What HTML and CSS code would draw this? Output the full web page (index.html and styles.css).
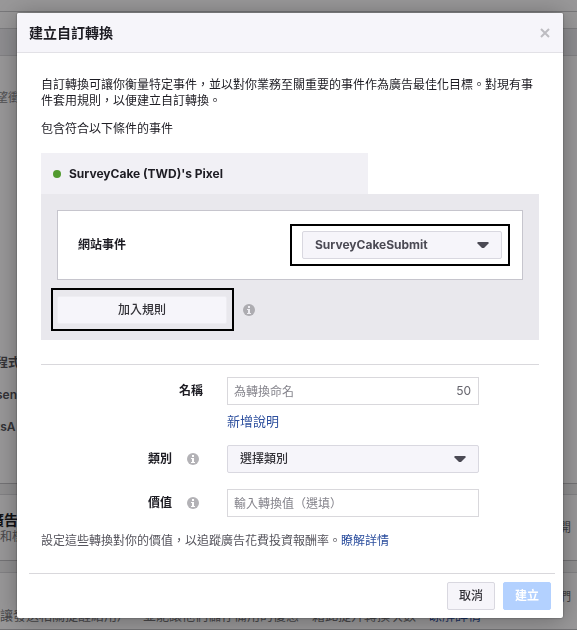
FILE: index.html
```html
<!DOCTYPE html>
<html lang="zh-Hant">

<head>
  <meta charset="utf-8">
  <title>建立自訂轉換</title>
  <link rel="stylesheet" href="styles.css">
</head>

<body>
  <div class="page">
    <div class="topbar"></div>
    <div class="subbar"></div>
    <div class="toolbar"></div>
    <div class="panel events">
      <p class="muted">望衝</p>
      <ul>
        <li>程式</li>
        <li>sen</li>
        <li>tsA</li>
      </ul>
    </div>
    <div class="panel card">
      <div>
        <h2>廣告</h2>
        <p>和標</p>
      </div>
      <span class="mark">開</span>
    </div>
    <div class="panel tips">
      <span class="mark">們</span>
      <p>讓發送相關提醒給用戶，並能讓他們儲存備用的優惠，藉此提升轉換次數。<a href="#">瞭解詳情</a></p>
    </div>
  </div>

  <div class="overlay">
    <form class="modal" role="dialog" aria-labelledby="title">
      <div class="modal-header">
        <h1 id="title">建立自訂轉換</h1>
        <button type="button" class="close" aria-label="關閉">
          <svg width="10" height="10" viewBox="0 0 10 10"><path d="M1 1l8 8M9 1L1 9" stroke="#bdbcc1" stroke-width="2" /></svg>
        </button>
      </div>

      <div class="modal-body">
        <p>自訂轉換可讓你衡量特定事件，並以對你業務至關重要的事件作為廣告最佳化目標。對現有事件套用規則，以便建立自訂轉換。</p>
        <p>包含符合以下條件的事件</p>

        <div class="pixel-tab"><span class="dot"></span>SurveyCake (TWD)'s Pixel</div>
        <div class="rules">
          <div class="rule">
            <label for="event">網站事件</label>
            <div class="highlight highlight-event">
              <div class="select">
                <select id="event">
                  <option>SurveyCakeSubmit</option>
                </select>
                <svg class="arrow" width="12" height="6" viewBox="0 0 12 6"><path d="M1 0h10l1 1-5 5H5L0 1z" fill="#4b4a54" /></svg>
              </div>
            </div>
          </div>
          <div class="add-rule">
            <div class="highlight highlight-add">
              <button type="button" class="btn btn-add">加入規則</button>
            </div>
            <svg class="info" width="12" height="12" viewBox="0 0 12 12"><circle cx="6" cy="6" r="6" fill="#adacb1" /><path d="M5 2h2v2H5zM4 5h3v4h1v1H4V9h1V6H4z" fill="#eeedf2" /></svg>
          </div>
        </div>

        <hr>

        <div class="row">
          <div class="row-label"><label for="name">名稱</label></div>
          <div class="field">
            <input type="text" id="name" placeholder="為轉換命名">
            <span class="counter">50</span>
          </div>
        </div>
        <a class="add-desc" href="#">新增說明</a>
        <div class="row">
          <div class="row-label">
            <label for="category">類別</label>
            <svg class="info" width="12" height="12" viewBox="0 0 12 12"><circle cx="6" cy="6" r="6" fill="#b3b2b6" /><path d="M5 2h2v2H5zM4 5h3v4h1v1H4V9h1V6H4z" fill="#fff" /></svg>
          </div>
          <div class="field select">
            <select id="category">
              <option>選擇類別</option>
            </select>
            <svg class="arrow" width="12" height="6" viewBox="0 0 12 6"><path d="M1 0h10l1 1-5 5H5L0 1z" fill="#4b4a54" /></svg>
          </div>
        </div>
        <div class="row">
          <div class="row-label">
            <label for="value">價值</label>
            <svg class="info" width="12" height="12" viewBox="0 0 12 12"><circle cx="6" cy="6" r="6" fill="#b3b2b6" /><path d="M5 2h2v2H5zM4 5h3v4h1v1H4V9h1V6H4z" fill="#fff" /></svg>
          </div>
          <div class="field">
            <input type="text" id="value" placeholder="輸入轉換值（選填）">
          </div>
        </div>
        <p class="hint">設定這些轉換對你的價值，以追蹤廣告花費投資報酬率。<a href="#">瞭解詳情</a></p>
      </div>

      <div class="modal-footer">
        <button type="button" class="btn">取消</button>
        <button type="submit" class="btn btn-primary" disabled>建立</button>
      </div>
    </form>
  </div>
</body>

</html>
```

FILE: styles.css
```css
* {
  box-sizing: border-box;
}

body,
input,
select,
button {
  font-family: Inter, "Noto Sans CJK TC", sans-serif;
  font-size: 12px;
  line-height: 16px;
}

body {
  margin: 0;
  color: #1d1c23;
}

h1,
h2,
p,
ul {
  margin: 0;
  padding: 0;
}

a {
  color: #2d4f9e;
  text-decoration: none;
}

/* page behind the dialog */
.page {
  display: flex;
  flex-direction: column;
  height: 100vh;
  overflow: hidden;
  background: #efeef0;
}

.page > * {
  flex-shrink: 0;
}

.topbar {
  height: 12px;
  background: #fdfcfe;
  border-bottom: 1px solid #c8c7cb;
}

.subbar {
  height: 17px;
  background: #fdfcfe;
  border-bottom: 1px solid #d0cfd3;
}

.toolbar {
  height: 27px;
  background: #ecebf0;
  border-bottom: 1px solid #d8d7db;
}

.panel {
  background: #fdfcfe;
  border-bottom: 1px solid #c0bfc3;
}

.events {
  height: 428px;
  padding-top: 34px;
  margin-bottom: 10px;
}

.muted {
  color: #8a898d;
  text-indent: -4px;
}

.events ul {
  margin-top: 241px;
  list-style: none;
  color: #55545a;
  font-weight: 600;
  line-height: 32px;
  text-indent: -4px;
}

.card {
  display: flex;
  justify-content: space-between;
  align-items: center;
  height: 67px;
  margin-bottom: 11px;
  border-top: 1px solid #d8d7db;
}

.card h2 {
  font-size: 14px;
  line-height: 18px;
  text-indent: -10px;
}

.card p {
  color: #77767a;
}

.mark {
  margin-right: 6px;
  color: #6b6a6e;
}

.tips {
  display: flex;
  flex-direction: column;
  flex: 1;
  padding-top: 16px;
  border-top: 1px solid #d8d7db;
}

.tips .mark {
  align-self: flex-end;
}

.tips p {
  margin-top: 2px;
  font-size: 13px;
  color: #77767a;
  white-space: nowrap;
}

/* dialog */
.overlay {
  position: fixed;
  inset: 0;
  padding: 13px 14px 12px 17px;
  background: rgba(0, 0, 0, .4);
}

.modal {
  background: #fff;
  border-radius: 2px;
  box-shadow: 0 2px 24px rgba(0, 0, 0, .3), 0 0 2px rgba(0, 0, 0, .5);
}

.modal-header {
  display: flex;
  justify-content: space-between;
  align-items: center;
  height: 40px;
  padding: 0 12px;
  background: #f6f5fa;
  border-bottom: 1px solid #e2e1e6;
  border-radius: 2px 2px 0 0;
}

.modal-header h1 {
  font-size: 14px;
  line-height: 20px;
}

.close {
  display: flex;
  padding: 1px;
  border: 0;
  background: none;
}

.modal-body {
  padding: 24px 24px 0;
}

.modal-body p {
  margin-bottom: 12px;
}

.pixel-tab {
  display: flex;
  align-items: center;
  width: 327px;
  height: 41px;
  margin-top: 16px;
  padding-left: 12px;
  background: #f1f0f5;
  font-weight: 700;
}

.dot {
  width: 8px;
  height: 8px;
  margin-right: 8px;
  border-radius: 50%;
  background: #519a2e;
}

.rules {
  padding: 16px 10px 9px;
  background: #e9e8ed;
}

.rule {
  display: flex;
  justify-content: space-between;
  align-items: center;
  height: 70px;
  margin: 0 6px 8px;
  padding: 0 12px 0 20px;
  background: #fff;
  border: 1px solid #c6c5cd;
}

.rule label,
.row label {
  font-weight: 600;
}

.highlight {
  border: 2px solid #000;
}

.highlight-event {
  width: 220px;
  padding: 5px 6px 5px 10px;
}

.add-rule {
  display: flex;
  align-items: center;
  gap: 9px;
}

.highlight-add {
  padding: 6px 5px 5px 4px;
}

.select {
  position: relative;
}

.arrow {
  position: absolute;
  top: 11px;
  right: 13px;
}

select {
  appearance: none;
  display: block;
  width: 100%;
  height: 28px;
  padding: 0 12px;
  background: #f6f5fa;
  border: 1px solid #d9d8e0;
  border-radius: 2px;
  color: #4b4a54;
  font-weight: 700;
}

#category {
  color: #333238;
  font-weight: 500;
}

.btn {
  height: 28px;
  padding: 0 11px;
  background: #f6f5fa;
  border: 1px solid #d9d8e0;
  border-radius: 2px;
  color: #333238;
  font-weight: 500;
}

.btn-add {
  display: block;
  width: 170px;
  border-color: #eeedf2;
}

.btn-primary {
  background: #b3d1ff;
  border-color: #b3d1ff;
  color: #fff;
  font-weight: 600;
}

hr {
  margin: 24px 0 12px;
  border: 0;
  border-top: 1px solid #d9d8dc;
}

.row {
  display: flex;
  align-items: center;
  gap: 24px;
  margin-bottom: 16px;
}

.row-label {
  display: flex;
  justify-content: flex-end;
  align-items: center;
  gap: 15px;
  width: 162px;
}

.row-label .info {
  margin-right: 4px;
}

.field {
  position: relative;
  width: 252px;
}

input {
  display: block;
  width: 100%;
  height: 28px;
  padding: 0 6px;
  border: 1px solid #d9d8dc;
}

input::placeholder {
  color: #85848c;
}

.counter {
  position: absolute;
  top: 6px;
  right: 8px;
  color: #66656d;
}

.add-desc {
  display: block;
  margin: -8px 0 16px 186px;
  font-size: 13px;
}

.modal-body .hint {
  margin-bottom: 24px;
  color: #55545c;
}

.modal-footer {
  display: flex;
  justify-content: flex-end;
  gap: 8px;
  margin: 0 8px 0 12px;
  padding: 8px 4px 8px 0;
  border-top: 1px solid #d9d8dc;
}
```
